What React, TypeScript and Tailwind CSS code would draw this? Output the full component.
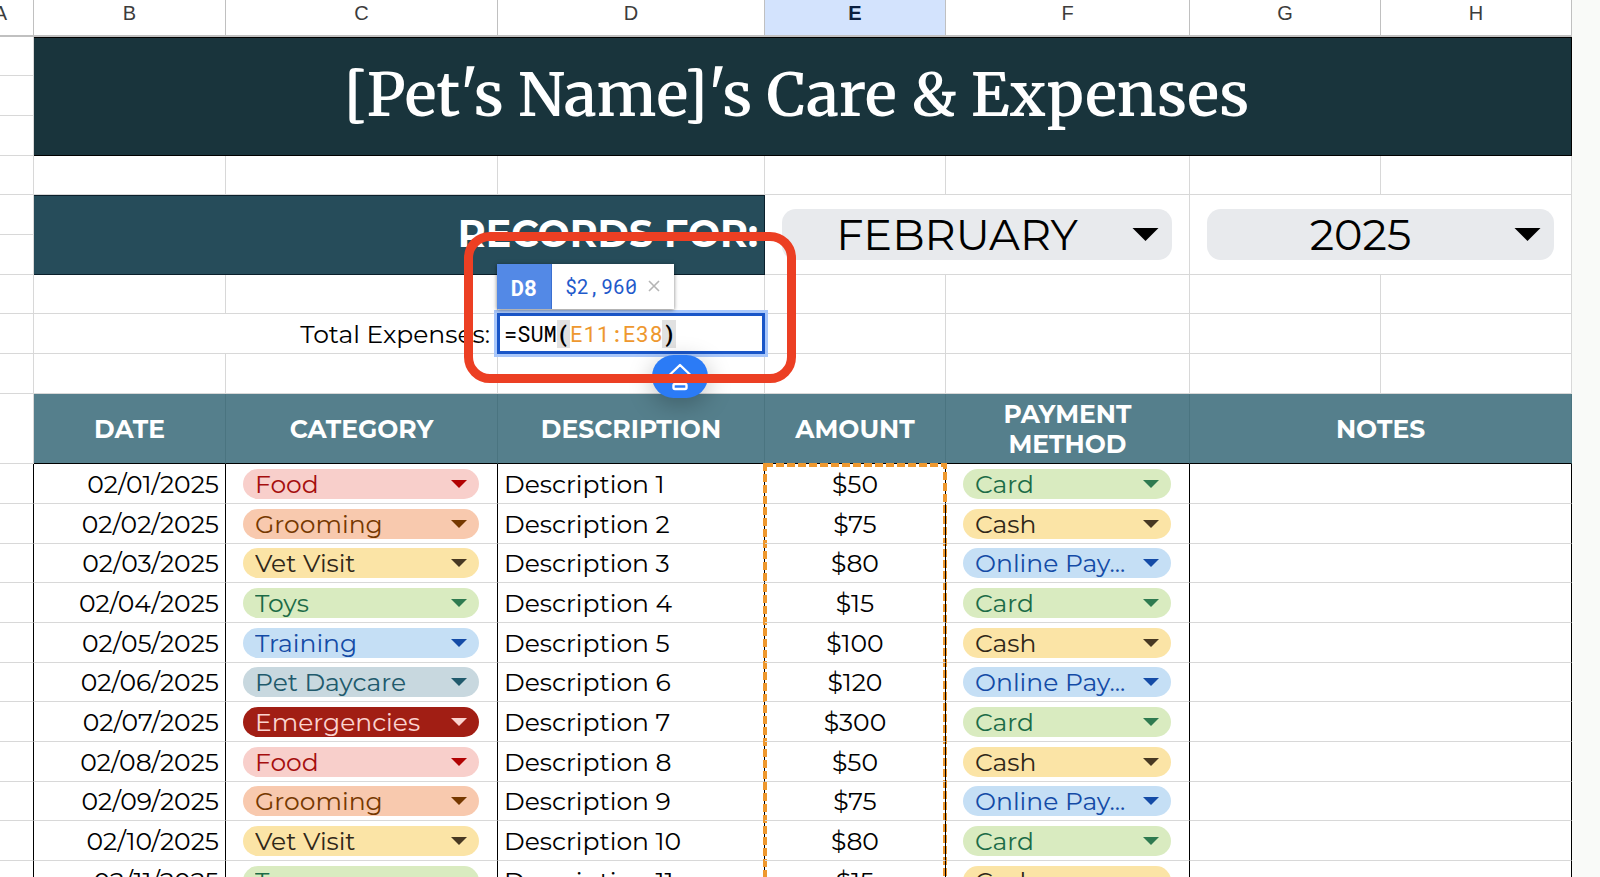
import React, { useState } from 'react';

type Tone = { chip: string; caret: string };

const CATEGORIES: Record<string, Tone> = {
  Food: { chip: 'bg-[#f8cfcb] text-[#a50e0e]', caret: 'text-[#b10202]' },
  Grooming: { chip: 'bg-[#f8c9ae] text-[#753800]', caret: 'text-[#753800]' },
  'Vet Visit': { chip: 'bg-[#fbe4a6] text-[#2f2718]', caret: 'text-[#473822]' },
  Toys: { chip: 'bg-[#d9ebc0] text-[#1c6b47]', caret: 'text-[#2f7a50]' },
  Training: { chip: 'bg-[#c5dff5] text-[#144ba6]', caret: 'text-[#144ba6]' },
  'Pet Daycare': { chip: 'bg-[#c8d8df] text-[#215a6c]', caret: 'text-[#215a6c]' },
  Emergencies: { chip: 'bg-[#a11e14] text-[#fbd3cf]', caret: 'text-[#fbd3cf]' }
};

const PAYMENTS: Record<string, Tone> = {
  Card: { chip: 'bg-[#d9ebc0] text-[#1c6b47]', caret: 'text-[#2f7a50]' },
  Cash: { chip: 'bg-[#fbe4a6] text-[#2f2718]', caret: 'text-[#473822]' },
  'Online Pay...': { chip: 'bg-[#c5dff5] text-[#144ba6]', caret: 'text-[#144ba6]' }
};

const ROWS = [
  { date: '02/01/2025', category: 'Food', amount: '$50', payment: 'Card' },
  { date: '02/02/2025', category: 'Grooming', amount: '$75', payment: 'Cash' },
  { date: '02/03/2025', category: 'Vet Visit', amount: '$80', payment: 'Online Pay...' },
  { date: '02/04/2025', category: 'Toys', amount: '$15', payment: 'Card' },
  { date: '02/05/2025', category: 'Training', amount: '$100', payment: 'Cash' },
  { date: '02/06/2025', category: 'Pet Daycare', amount: '$120', payment: 'Online Pay...' },
  { date: '02/07/2025', category: 'Emergencies', amount: '$300', payment: 'Card' },
  { date: '02/08/2025', category: 'Food', amount: '$50', payment: 'Cash' },
  { date: '02/09/2025', category: 'Grooming', amount: '$75', payment: 'Online Pay...' },
  { date: '02/10/2025', category: 'Vet Visit', amount: '$80', payment: 'Card' },
  { date: '02/11/2025', category: 'Toys', amount: '$15', payment: 'Cash' }
];

const COLUMNS = ['A', 'B', 'C', 'D', 'E', 'F', 'G', 'H'];

const GRID = 'border-r border-b border-[#d8d8d8]';
const BODY = 'border-r border-b border-r-black border-b-[#d8d8d8]';
const HEAD = 'border-r border-b border-r-[#4a7480] border-b-black bg-[#557f8c] text-center font-bold text-white';

function Caret({ className }: { className: string }) {
  return (
    <svg viewBox="0 0 16 8" className={`pointer-events-none absolute ${className}`} fill="currentColor" aria-hidden="true">
      <path d="M0 0h16L8 8z" />
    </svg>
  );
}

function Chip({ label, value, options }: { label: string; value: string; options: Record<string, Tone> }) {
  const [current, setCurrent] = useState(value);
  return (
    <div className="relative mr-[18px] ml-[17px]">
      <select
        aria-label={label}
        value={current}
        onChange={e => setCurrent(e.target.value)}
        className={`block h-[30px] w-full appearance-none rounded-full pr-8 pl-3 leading-[30px] ${options[current].chip}`}
      >
        {Object.keys(options).map(name => (
          <option key={name}>{name}</option>
        ))}
      </select>
      <Caret className={`top-[11px] right-3 h-2 w-4 ${options[current].caret}`} />
    </div>
  );
}

function PeriodSelect({ label, options }: { label: string; options: string[] }) {
  return (
    <div className="relative mx-[17px]">
      <select
        aria-label={label}
        className="block h-[51px] w-full appearance-none rounded-[14px] bg-[#e8eaed] pr-10 text-center text-[43px] leading-[51px] text-black"
      >
        {options.map(name => (
          <option key={name}>{name}</option>
        ))}
      </select>
      <Caret className="top-[19px] right-[13px] h-[13px] w-[27px]" />
    </div>
  );
}

// Empty gridded cells, one per column
function Blanks({ count }: { count: number }) {
  return (
    <>
      {Array.from({ length: count }, (_, i) => (
        <td key={i} className={GRID} />
      ))}
    </>
  );
}

function FormulaEditor() {
  return (
    <>
      {/* Cell editor */}
      <div
        role="textbox"
        aria-label="Formula for D8"
        className="absolute -inset-px flex items-center border-[3px] border-[#1a56c8] bg-white pl-1 font-['Roboto_Mono','Liberation_Mono',monospace] text-[22px] leading-[28px] ring-[3px] ring-[#a9c7fa]"
      >
        <span>=SUM</span>
        <span className="bg-[#e1e1e1] font-bold">(</span>
        <span className="text-[#ee982f]">E11:E38</span>
        <span className="bg-[#e1e1e1] font-bold">)</span>
      </div>

      {/* Result preview */}
      <div className="absolute bottom-[44px] -left-px flex h-[45px] font-['Roboto_Mono','Liberation_Mono',monospace] shadow-[0_1px_4px_rgba(0,0,0,0.5)]">
        <div className="flex w-[54px] items-center justify-center bg-[#5389e6] pt-0.5 text-[22px] font-bold text-white">D8</div>
        <div className="flex items-center border-l border-[#3a6fd0] bg-white pr-[14px] pb-0.5 pl-[13px] text-[20px] text-[#1f5acb]">
          $2,960
          <button type="button" aria-label="Close preview" className="ml-[11px] text-[#b5b5b5]">
            <svg viewBox="0 0 12 12" className="h-3 w-3" fill="none" stroke="currentColor" strokeWidth="1.6">
              <path d="M1 1l10 10M11 1L1 11" />
            </svg>
          </button>
        </div>
      </div>

      <button
        type="button"
        aria-label="Expand formula"
        className="absolute top-[41px] left-[154px] flex h-[43px] w-14 items-center justify-center rounded-full bg-[#2b7bf6] text-white shadow-[0_6px_24px_rgba(0,0,0,0.25)]"
      >
        <svg viewBox="0 0 26 28" className="h-7 w-[26px]" fill="none" stroke="currentColor" strokeWidth="2.4" strokeLinejoin="round">
          <path d="M13 2L2 12.500h5v3h12v-3h5z" />
          <rect x="6.500" y="21" width="13" height="5" rx="1.500" />
        </svg>
      </button>

      {/* Highlight */}
      <div className="pointer-events-none absolute -top-[82px] -left-[34px] h-[151px] w-[332px] rounded-[26px] border-[9px] border-[#ec3f23]" />
    </>
  );
}

function App() {
  return (
    <div className="flex h-screen overflow-hidden bg-[#f9faf8] font-['Montserrat',Inter,sans-serif] text-[25px] leading-[30px] text-black">
      <div className="min-w-0 flex-1">
        <div className="-ml-8">
          <table className="w-full table-fixed border-separate border-spacing-0 bg-white [&_td]:p-0 [&_th]:p-0">
            <colgroup>
              <col className="w-[66px]" />
              <col className="w-[192px]" />
              <col className="w-[272px]" />
              <col className="w-[267px]" />
              <col className="w-[181px]" />
              <col className="w-[244px]" />
              <col className="w-[191px]" />
              <col className="w-[191px]" />
            </colgroup>

            <thead>
              <tr className="h-[37px]">
                {COLUMNS.map(letter => (
                  <th
                    key={letter}
                    scope="col"
                    className={`border-r border-b-2 border-[#c0c0c0] text-center align-top font-['Liberation_Sans',sans-serif] text-[20px] leading-[26px] ${
                      letter === 'E' ? 'bg-[#d3e3fd] font-bold text-[#0b1f3f]' : 'font-normal text-[#3c3c3c]'
                    }`}
                  >
                    {letter}
                  </th>
                ))}
              </tr>
            </thead>

            <tbody>
              {/* Title */}
              <tr className="h-[39px]">
                <Blanks count={1} />
                <td colSpan={7} rowSpan={3} className="border-y border-r border-black bg-[#19343c] pr-3! pb-1! text-center">
                  <h1 className="font-['Merriweather','DejaVu_Serif_Condensed','DejaVu_Serif',serif] text-[60px] leading-[76px] font-semibold text-white">
                    [Pet's Name]'s Care &amp; Expenses
                  </h1>
                </td>
              </tr>
              <tr className="h-[40px]"><Blanks count={1} /></tr>
              <tr className="h-[40px]"><Blanks count={1} /></tr>
              <tr className="h-[39px]"><Blanks count={8} /></tr>

              {/* Period */}
              <tr className="h-[40px]">
                <Blanks count={1} />
                <td colSpan={3} rowSpan={2} className="border-y border-r border-[#0a1f2b] bg-[#264c5a] pr-1.5! pb-0.5! text-right text-[38px] font-bold text-white">
                  RECORDS FOR:
                </td>
                <td colSpan={2} rowSpan={2} className={GRID}>
                  <PeriodSelect label="Month" options={['FEBRUARY', 'MARCH', 'APRIL']} />
                </td>
                <td colSpan={2} rowSpan={2} className={GRID}>
                  <PeriodSelect label="Year" options={['2025', '2026']} />
                </td>
              </tr>
              <tr className="h-[40px]"><Blanks count={1} /></tr>
              <tr className="h-[39px]"><Blanks count={8} /></tr>

              {/* Total */}
              <tr className="h-[40px]">
                <Blanks count={1} />
                <td colSpan={2} className={`${GRID} pr-[7px]! text-right`}>Total Expenses:</td>
                <td className={`${GRID} relative z-10`}>
                  <FormulaEditor />
                </td>
                <Blanks count={4} />
              </tr>
              <tr className="h-[40px]"><Blanks count={8} /></tr>

              {/* Column titles */}
              <tr className="h-[70px]">
                <Blanks count={1} />
                <th scope="col" className={HEAD}>DATE</th>
                <th scope="col" className={HEAD}>CATEGORY</th>
                <th scope="col" className={HEAD}>DESCRIPTION</th>
                <th scope="col" className={HEAD}>AMOUNT</th>
                <th scope="col" className={HEAD}>PAYMENT<br />METHOD</th>
                <th scope="col" colSpan={2} className={HEAD}>NOTES</th>
              </tr>
            </tbody>

            <tbody>
              {ROWS.map((row, i) => (
                <tr key={row.date} className="h-[40px] nth-[3n]:h-[39px]">
                  <td className={BODY} />
                  <td className={`${BODY} pr-1.5! text-right`}>{row.date}</td>
                  <td className={BODY}>
                    <Chip label={`Category ${row.date}`} value={row.category} options={CATEGORIES} />
                  </td>
                  <td className={`${BODY} pl-1.5!`}>Description {i + 1}</td>
                  <td className={`${BODY} relative text-center`}>
                    {row.amount}
                    {/* Marching border round the summed range */}
                    {i === 0 && (
                      <svg className="pointer-events-none absolute -top-px -left-0.5 h-[1120px] w-[184px]" fill="none" aria-hidden="true">
                        <rect x="2" y="2" width="180" height="1110" stroke="#ee982f" strokeWidth="4" strokeDasharray="8 3" />
                      </svg>
                    )}
                  </td>
                  <td className={BODY}>
                    <Chip label={`Payment ${row.date}`} value={row.payment} options={PAYMENTS} />
                  </td>
                  <td colSpan={2} className={BODY} />
                </tr>
              ))}
            </tbody>
          </table>
        </div>
      </div>
      <aside className="w-7 shrink-0" />
    </div>
  );
}

export default App;
